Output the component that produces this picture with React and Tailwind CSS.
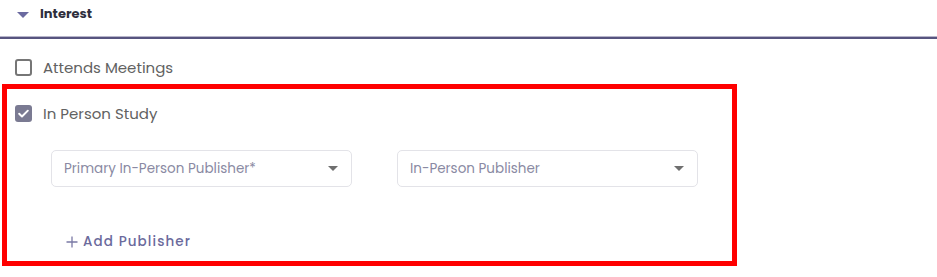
import { useState } from 'react';

const Checkbox = ({ checked }) => (
  <span
    className={
      checked
        ? 'w-[17px] h-[17px] rounded-[3px] bg-[#7a7a92] flex items-center justify-center shrink-0'
        : 'w-[17px] h-[17px] rounded-[3px] border-2 border-[#767676] shrink-0'
    }
  >
    {checked && (
      <svg width="13" height="13" viewBox="0 0 12 12" fill="none">
        <path d="M2 6.2l2.6 2.6L10 3.4" stroke="#fff" strokeWidth="1.8" strokeLinecap="round" strokeLinejoin="round" />
      </svg>
    )}
  </span>
);

const SelectBox = ({ label }) => (
  <div className="w-[301px] h-[37px] border border-[#e3e3e8] rounded-[5px] flex items-center justify-between pl-[12px] pr-[13px]">
    <span className="text-[13.5px] text-[#8a8aa3] pt-[1px]">{label}</span>
    <span className="w-0 h-0 border-l-[5px] border-r-[5px] border-t-[5px] border-l-transparent border-r-transparent border-t-[#6f6f6f]"></span>
  </div>
);

const App = () => {
  const [inPerson] = useState(true);

  return (
    <div className="w-[937px] h-[277px] bg-white font-['Poppins','Inter',sans-serif] overflow-hidden">
      <div className="h-[36px] flex items-start pt-[4px] pl-[17px]">
        <span className="w-0 h-0 mt-[8px] border-l-[6px] border-r-[6px] border-t-[6px] border-l-transparent border-r-transparent border-t-[#6b6aa0]"></span>
        <span className="ml-[11px] text-[13px] font-bold text-[#2f2f3d]">Interest</span>
      </div>
      <div className="h-[1px] bg-[#b7b5ca]"></div>
      <div className="h-[2px] bg-[#57547f]"></div>

      <div className="flex items-center gap-[11px] pl-[15px] mt-[20px] h-[17px]">
        <Checkbox checked={false} />
        <span className="text-[15px] text-[#626262] pt-[1px]">Attends Meetings</span>
      </div>

      <div className="ml-[2px] mt-[8px] w-[735px] h-[182px] border-[5px] border-[#ff0000] pl-[8px]">
        <div className="flex items-center gap-[11px] mt-[16px] h-[17px]">
          <Checkbox checked={inPerson} />
          <span className="text-[15px] text-[#626262] pt-[1px]">In Person Study</span>
        </div>

        <div className="flex gap-[45px] ml-[36px] mt-[28px]">
          <SelectBox label="Primary In-Person Publisher*" />
          <SelectBox label="In-Person Publisher" />
        </div>

        <div className="flex items-center gap-[5px] ml-[51px] mt-[45px] text-[#6b6a9c]">
          <svg width="12" height="12" viewBox="0 0 12 12">
            <path d="M6 0.5v11M0.5 6h11" stroke="#7a79a5" strokeWidth="1.3" />
          </svg>
          <span className="text-[13.5px] font-medium tracking-[1.1px]">Add Publisher</span>
        </div>
      </div>
    </div>
  );
};

export default App;
